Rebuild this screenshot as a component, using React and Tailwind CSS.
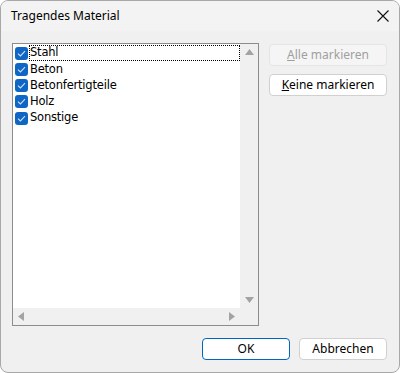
import React from "react";

const items = ["Stahl", "Beton", "Betonfertigteile", "Holz", "Sonstige"];

function Check() {
  return (
    <div className="w-[13px] h-[13px] rounded-[3px] bg-[#1066c4] flex items-center justify-center shrink-0">
      <svg width="9" height="7" viewBox="0 0 9 7">
        <path d="M1 3.6 L3.4 6 L8 1.2" fill="none" stroke="#cfe3f7" strokeWidth="1.1" />
      </svg>
    </div>
  );
}

function Btn({ children, disabled, primary }) {
  return (
    <div
      className={
        "h-[22px] flex items-center justify-center rounded-[4px] border text-[12px] " +
        (disabled
          ? "bg-[#f5f5f5] border-[#e5e5e5] text-[#a0a0a0]"
          : primary
          ? "bg-white border-[#0067c0] text-black"
          : "bg-white border-[#d0d0d0] text-black")
      }
    >
      {children}
    </div>
  );
}

export default function App() {
  return (
    <div
      className="w-[400px] h-[373px] border border-[#a8a8a8] rounded-[8px] overflow-hidden bg-[#f0f0f0] flex flex-col"
      style={{ fontFamily: '"Segoe UI", "Noto Sans", sans-serif' }}
    >
      <div className="h-[30px] bg-[#f3f3f3] flex items-center justify-between pl-[10px] pr-[8px] shrink-0">
        <span className="text-[12px] text-black">Tragendes Material</span>
        <svg width="14" height="14" viewBox="0 0 14 14" className="mr-[1px]">
          <path d="M1.5 1.5 L12.5 12.5 M12.5 1.5 L1.5 12.5" stroke="#111" strokeWidth="1.1" />
        </svg>
      </div>
      <div className="flex-1 flex flex-col pt-[12px] px-[11px]">
        <div className="flex">
          <div className="w-[247px] h-[283px] border border-[#8c8c8c] bg-white flex flex-col">
            <div className="flex flex-1 min-h-0">
              <div className="flex-1 flex flex-col pt-[1px] pl-[2px]">
                {items.map((it, i) => (
                  <div key={it} className="h-[16.25px] flex items-center gap-[1px]">
                    <Check />
                    <span
                      className={
                        "h-[16px] flex items-center pl-[1px] text-[11.5px] leading-none text-black " +
                        (i === 0 ? "outline outline-1 outline-dotted outline-black -outline-offset-1 flex-1" : "")
                      }
                      style={{ fontFamily: 'Tahoma, "DejaVu Sans", sans-serif', letterSpacing: "-0.2px" }}
                    >
                      {it}
                    </span>
                  </div>
                ))}
              </div>
              <div className="w-[18px] bg-[#f0f0f0] flex flex-col items-center justify-between py-[5px]">
                <svg width="9" height="6" viewBox="0 0 9 6">
                  <path d="M0 6 L4.5 0 L9 6 Z" fill="#a3a3a3" />
                </svg>
                <svg width="9" height="6" viewBox="0 0 9 6">
                  <path d="M0 0 L4.5 6 L9 0 Z" fill="#a3a3a3" />
                </svg>
              </div>
            </div>
            <div className="h-[17px] flex">
              <div className="flex-1 bg-[#f0f0f0] flex items-center justify-between px-[5px]">
                <svg width="6" height="9" viewBox="0 0 6 9">
                  <path d="M6 0 L0 4.5 L6 9 Z" fill="#a3a3a3" />
                </svg>
                <svg width="6" height="9" viewBox="0 0 6 9">
                  <path d="M0 0 L6 4.5 L0 9 Z" fill="#a3a3a3" />
                </svg>
              </div>
              <div className="w-[18px] bg-[#f0f0f0]" />
            </div>
          </div>
          <div className="ml-[10px] w-[118px] flex flex-col gap-[8px] pt-[1px]">
            <Btn disabled>
              <span><span className="underline">A</span>lle markieren</span>
            </Btn>
            <Btn>
              <span><span className="underline">K</span>eine markieren</span>
            </Btn>
          </div>
        </div>
        <div className="mt-[12px] flex justify-end gap-[9px] pr-[1px]">
          <div className="w-[88px]"><Btn primary>OK</Btn></div>
          <div className="w-[88px]"><Btn>Abbrechen</Btn></div>
        </div>
      </div>
    </div>
  );
}
